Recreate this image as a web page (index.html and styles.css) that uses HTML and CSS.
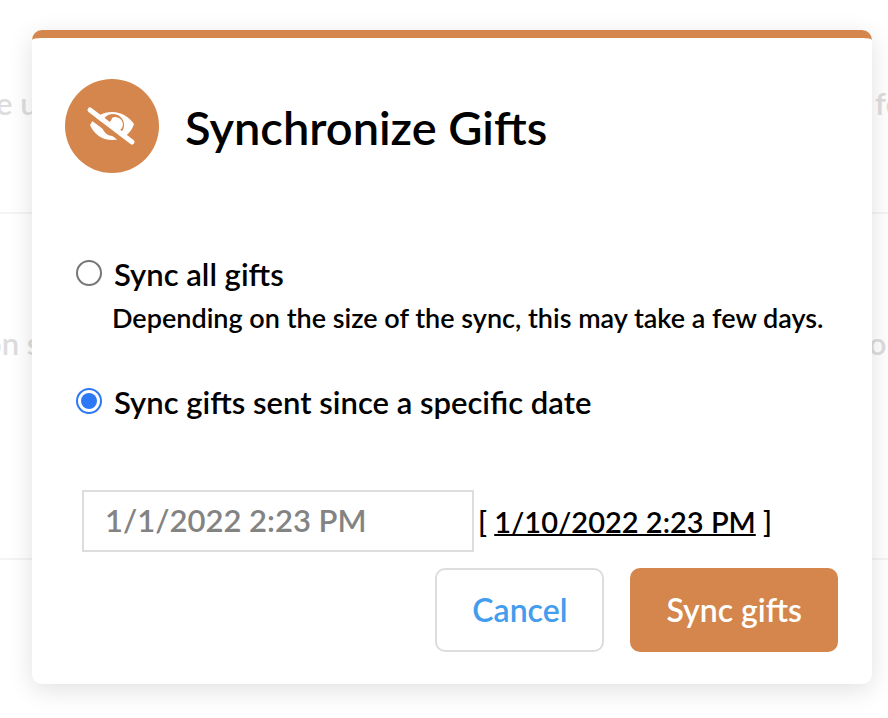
FILE: index.html
```
<!DOCTYPE html>
<html lang="en">
  <head>
    <meta charset="UTF-8" />
    <meta name="viewport" content="width=device-width, initial-scale=1.0" />
    <title>Synchronize Gifts</title>
    <link rel="stylesheet" href="styles.css">
  </head>

  <body>
    <div class="page">
      <div class="row row-first">
        <span>e u</span>
        <span>fe</span>
      </div>
      <div class="row row-second">
        <span>on s</span>
        <span>or</span>
      </div>
    </div>

    <div class="overlay">
      <form class="dialog" role="dialog" aria-labelledby="dialog-title">
        <div class="dialog-header">
          <div class="dialog-icon">
            <svg viewBox="0 0 94 94" aria-hidden="true">
              <path d="M25 46 C30 37 38 33 47 33 C57 33 64 38 69 45 C66 55 57 61 47 61 C37 61 29 55 25 46Z" fill="#fff" />
              <circle cx="48" cy="46" r="11" fill="#d4864c" />
              <path d="M42 44 L42 43 Q46 44 47 39 A7 7 0 0 1 54 52Z" fill="#fff" />
              <path d="M22 35 L65 67" stroke="#d4864c" stroke-width="5" />
              <path d="M25 31 L67 63" stroke="#fff" stroke-width="5" stroke-linecap="round" />
            </svg>
          </div>
          <h1 class="dialog-title" id="dialog-title">Synchronize Gifts</h1>
        </div>

        <div class="options">
          <div class="option">
            <input type="radio" name="sync" id="sync-all" class="radio" aria-describedby="sync-all-hint">
            <label for="sync-all">Sync all gifts</label>
          </div>
          <p class="hint" id="sync-all-hint">Depending on the size of the sync, this may take a few days.</p>
          <div class="option">
            <input type="radio" name="sync" id="sync-since" class="radio" checked>
            <label for="sync-since">Sync gifts sent since a specific date</label>
          </div>
        </div>

        <div class="date-row">
          <input type="text" class="date-input" aria-label="Sync gifts sent since" placeholder="1/1/2022 2:23 PM">
          <span>[ <a href="#" class="date-link">1/10/2022 2:23 PM</a> ]</span>
        </div>

        <div class="buttons">
          <button type="button" class="btn btn-cancel">Cancel</button>
          <button type="submit" class="btn btn-sync">Sync gifts</button>
        </div>
      </form>
    </div>
  </body>
</html>
```
FILE: styles.css
```
* {
  box-sizing: border-box;
}

body {
  margin: 0;
  background-color: #fff;
  color: #000;
  font-family: Lato, "Open Sans", sans-serif;
  font-size: 31px;
  font-weight: 600;
}

/* Page content behind the dialog */
.page {
  position: absolute;
  inset: 0;
  overflow: hidden;
  color: #ddd;
  line-height: 36px;
}

.row {
  display: flex;
  justify-content: space-between;
  border-bottom: 2px solid #f4f4f4;
  white-space: nowrap;
}

.row-first {
  height: 214px;
  margin: 0 -14px 0 -4px;
  padding-top: 85px;
}

.row-second {
  height: 346px;
  margin: 0 -10px 0 -16px;
  padding-top: 111px;
}

.overlay {
  position: relative;
  padding: 30px 16px 34px 32px;
}

.dialog {
  padding: 41px 34px 32px 33px;
  border-top: 8px solid #d4864c;
  border-radius: 10px;
  background-color: #fff;
  box-shadow: 0 6px 26px rgba(0, 0, 0, 0.12);
}

.dialog-header {
  display: flex;
  align-items: center;
  gap: 26px;
}

.dialog-icon {
  flex: none;
  width: 94px;
  height: 94px;
  border-radius: 50%;
  background-color: #d4864c;
}

.dialog-icon svg {
  display: block;
}

.dialog-title {
  margin: 0;
  padding-top: 2px;
  font-size: 47px;
  font-weight: 600;
  line-height: 56px;
}

.options {
  padding: 79px 0 0 11px;
}

.option {
  display: flex;
  align-items: center;
  gap: 12px;
  line-height: 40px;
}

.option label {
  padding-top: 2px;
}

.radio {
  display: grid;
  place-content: center;
  appearance: none;
  width: 26px;
  height: 26px;
  margin: 0;
  border: 2px solid #767676;
  border-radius: 50%;
  background-color: #fff;
}

.radio:checked {
  border-color: #2c78f6;
}

.radio:checked::before {
  content: "";
  width: 16px;
  height: 16px;
  border-radius: 50%;
  background-color: #2c78f6;
}

.hint {
  margin: 4px 0 42px 36px;
  font-size: 27px;
  line-height: 40px;
}

.date-row {
  display: flex;
  align-items: center;
  gap: 4px;
  margin: 68px 0 16px;
  padding-left: 17px;
  font-size: 29px;
}

.date-input {
  width: 392px;
  height: 62px;
  padding: 0 21px 2px;
  border: 2px solid #ddd;
  font: inherit;
  font-size: 31px;
}

.date-input::placeholder {
  color: #838383;
}

.date-link {
  color: #000;
  text-decoration-thickness: 2px;
}

.buttons {
  display: flex;
  justify-content: flex-end;
  gap: 26px;
}

.btn {
  height: 84px;
  padding: 0 35px 2px;
  border: 2px solid #ddd;
  border-radius: 10px;
  background-color: #fff;
  font: inherit;
  font-size: 32px;
}

.btn-cancel {
  color: #439ced;
}

.btn-sync {
  padding: 0 34px 2px;
  border-color: #d4864c;
  background-color: #d4864c;
  color: #fff;
}
```
